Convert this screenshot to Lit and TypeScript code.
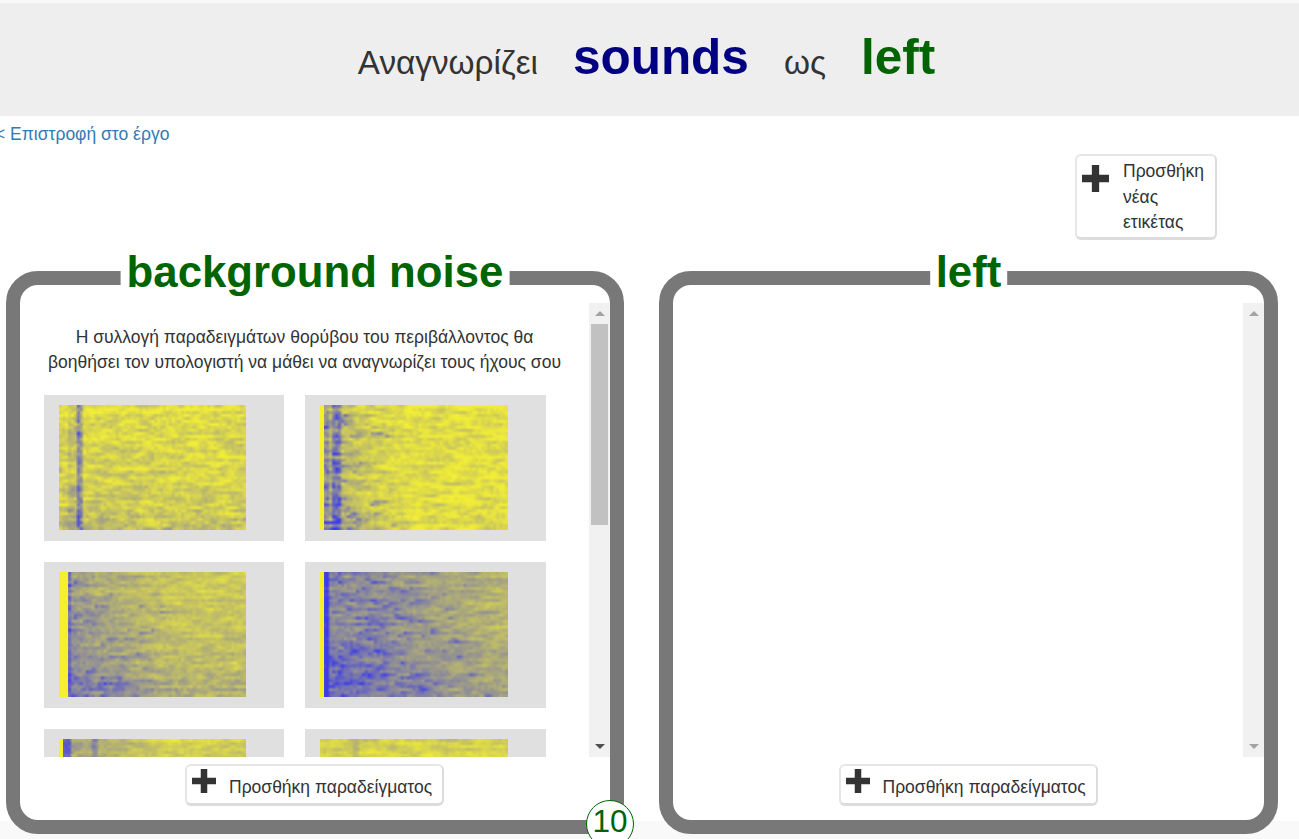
import { LitElement, html, css, svg } from 'lit';
import { customElement, property } from 'lit/decorators.js';

// noise settings for one spectrogram tile
interface Spectro {
  seed: number;
  stripe: number; // pure yellow band on the left, px
  base: number; // overall blue amount
  left: number; // extra blue that fades out to the right
  reach: number; // how far that fade goes, px
  bottom: number; // extra blue towards the bottom
  grain: number;
  spots: number; // chance of a blue streak starting near the left
  cols: { x: number; w: number; v: number; spotty?: boolean }[];
}

const TILES: Spectro[] = [
  { seed: 11, stripe: 0, base: 0.11, left: 0, reach: 60, bottom: 0.14, grain: 0.28, spots: 0,
    cols: [{ x: 19, w: 4, v: 0.36, spotty: true }, { x: 9, w: 10, v: 0.12, spotty: true }] },
  { seed: 23, stripe: 4, base: 0.06, left: 0.26, reach: 85, bottom: 0.05, grain: 0.26, spots: 0.12,
    cols: [{ x: 14, w: 5, v: 0.3, spotty: true }, { x: 5, w: 3, v: 0.14 }] },
  { seed: 37, stripe: 9, base: 0.2, left: 0.28, reach: 125, bottom: 0.14, grain: 0.2, spots: 0.08,
    cols: [{ x: 9, w: 2, v: 0.22 }] },
  { seed: 41, stripe: 4, base: 0.32, left: 0.26, reach: 170, bottom: 0.12, grain: 0.2, spots: 0.12,
    cols: [{ x: 4, w: 4, v: 0.4 }] },
  { seed: 53, stripe: 4, base: 0.18, left: 0.24, reach: 100, bottom: 0, grain: 0.2, spots: 0,
    cols: [{ x: 4, w: 8, v: 0.4 }, { x: 35, w: 3, v: 0.24 }] },
  { seed: 67, stripe: 0, base: 0.14, left: 0, reach: 60, bottom: 0, grain: 0.2, spots: 0,
    cols: [{ x: 35, w: 3, v: 0.14 }] },
];

function rng(seed: number) {
  return () => {
    seed = (seed + 0x6d2b79f5) | 0;
    let t = Math.imul(seed ^ (seed >>> 15), 1 | seed);
    t = (t + Math.imul(t ^ (t >>> 7), 61 | t)) ^ t;
    return ((t ^ (t >>> 14)) >>> 0) / 4294967296;
  };
}

@customElement('spectro-tile')
export class SpectroTile extends LitElement {
  @property({ type: Object }) data!: Spectro;

  static styles = css`
    :host {
      display: block;
      background: #e0e0e0;
      padding: 10px 38px 11px 15px;
      height: 146px;
      box-sizing: border-box;
    }
    canvas {
      display: block;
      width: 100%;
      height: 125px;
    }
  `;

  firstUpdated() {
    const canvas = this.renderRoot.querySelector('canvas') as HTMLCanvasElement;
    const ctx = canvas.getContext('2d')!;
    const d = this.data;
    const rand = rng(d.seed);
    const CW = 3;
    const CH = 3;
    const cols = Math.ceil(187 / CW);
    const rows = Math.ceil(125 / CH);
    const small = document.createElement('canvas');
    small.width = cols;
    small.height = rows;
    const sctx = small.getContext('2d')!;

    for (let r = 0; r < rows; r++) {
      const rowBias = (rand() - 0.5) * 0.06;
      let prev = rand() - 0.5;
      for (let c = 0; c < cols; c++) {
        const x = c * CW;
        const fade = Math.max(0, 1 - x / d.reach);
        // streaky noise, each cell leans on the one before it
        prev = prev * 0.65 + (rand() - 0.5) * 0.8;
        if (rand() < d.spots * fade * (0.4 + r / rows)) prev += 1.2;
        let v = d.base + rowBias + prev * d.grain;
        v += d.left * fade * (0.7 + rand() * 0.6);
        v += d.bottom * Math.pow(r / rows, 2) * (0.5 + rand());
        for (const col of d.cols) {
          if (x + CW > col.x && x < col.x + col.w) {
            v += col.v * (col.spotty ? 0.4 + rand() * 1.2 : 1);
          }
        }
        v = Math.min(1, Math.max(0, v));
        // yellow to blue, the middle comes out as that muddy grey
        const red = 241 + (60 - 241) * v;
        const green = 237 + (60 - 237) * v;
        const blue = 56 + (235 - 56) * v;
        sctx.fillStyle = `rgb(${red | 0},${green | 0},${blue | 0})`;
        sctx.fillRect(c, r, 1, 1);
      }
    }

    ctx.imageSmoothingEnabled = true;
    ctx.drawImage(small, 0, 0, 187, 125);
    if (d.stripe) {
      ctx.fillStyle = '#f4f02e';
      ctx.fillRect(0, 0, d.stripe, 125);
    }
  }

  render() {
    return html`<canvas width="187" height="125"></canvas>`;
  }
}

const plus = svg`<path d="M8.75 0h6.5v8.75H24v6.5h-8.75V24h-6.5v-8.75H0v-6.5h8.75z" fill="#333"/>`;

@customElement('sound-bucket')
export class SoundBucket extends LitElement {
  @property() label = '';
  @property({ type: Boolean }) filled = false;

  static styles = css`
    :host {
      display: block;
      position: relative;
      height: 563px;
      box-sizing: border-box;
      border: 14px solid #787878;
      border-radius: 32px;
      background: #fff;
      padding-top: 18px;
      font-family: 'Liberation Sans', Arial, sans-serif;
      color: #333;
    }
    .title {
      position: absolute;
      top: -38px;
      left: 50%;
      transform: translateX(-50%);
      padding: 0 6px;
      background: #fff;
      color: #006400;
      font-size: 43.75px;
      font-weight: 700;
      line-height: 50px;
      white-space: nowrap;
    }
    .body {
      display: flex;
      height: 454px;
      overflow: hidden;
    }
    .list {
      flex: 1;
      min-width: 0;
      overflow: hidden;
    }
    .hint {
      margin: 22px 0 0;
      font-size: 17.5px;
      line-height: 25px;
      text-align: center;
      white-space: nowrap;
    }
    .tiles {
      display: grid;
      grid-template-columns: 240px 241px;
      gap: 21px;
      margin: 20px 0 0 24px;
    }
    .bar {
      flex: none;
      width: 21px;
      background: #f1f1f1;
      display: flex;
      flex-direction: column;
      align-items: center;
    }
    .up,
    .down {
      flex: none;
      width: 0;
      height: 0;
      border-left: 5px solid transparent;
      border-right: 5px solid transparent;
    }
    .up {
      margin-top: 8px;
      border-bottom: 5px solid #a3a3a3;
    }
    .down {
      margin: auto 0 8px;
      border-top: 5px solid #a3a3a3;
    }
    .filled .down {
      border-top-color: #505050;
    }
    .thumb {
      width: 17px;
      height: 201px;
      margin-top: 8px;
      background: #c1c1c1;
    }
    .foot {
      display: flex;
      justify-content: center;
      margin: 7px 1px 0 0;
    }
    .add {
      display: flex;
      align-items: flex-start;
      box-sizing: border-box;
      width: 259px;
      height: 42px;
      padding: 3px 0 0 5px;
      border: 2px solid #e6e6e6;
      border-right-color: #dcdcdc;
      border-bottom: 3px solid #dcdcdc;
      border-radius: 6px;
      background: #fff;
      font-size: 17.5px;
      white-space: nowrap;
    }
    .add svg {
      flex: none;
      width: 24px;
      height: 24px;
      margin-right: 13px;
    }
    .add span {
      padding-top: 6px;
      line-height: 24px;
    }
  `;

  render() {
    return html`
      <div class="title">${this.label}</div>
      <div class="body ${this.filled ? 'filled' : ''}">
        <div class="list">
          ${this.filled
            ? html`
                <p class="hint">
                  Η συλλογή παραδειγμάτων θορύβου του περιβάλλοντος θα<br />
                  βοηθήσει τον υπολογιστή να μάθει να αναγνωρίζει τους ήχους σου
                </p>
                <div class="tiles">
                  ${TILES.map((t) => html`<spectro-tile .data=${t}></spectro-tile>`)}
                </div>
              `
            : ''}
        </div>
        <div class="bar">
          <div class="up"></div>
          ${this.filled ? html`<div class="thumb"></div>` : ''}
          <div class="down"></div>
        </div>
      </div>
      <div class="foot">
        <div class="add">
          <svg viewBox="0 0 24 24">${plus}</svg>
          <span>Προσθήκη παραδείγματος</span>
        </div>
      </div>
    `;
  }
}

@customElement('app-root')
export class AppRoot extends LitElement {
  static styles = css`
    :host {
      display: block;
      position: relative;
      height: 839px;
      overflow: hidden;
      padding-top: 3px;
      box-sizing: border-box;
      background: linear-gradient(#fff 821px, #f9f9f9 821px);
      font-family: 'Liberation Sans', Arial, sans-serif;
      color: #333;
    }
    .strip {
      position: absolute;
      top: 0;
      left: 0;
      right: 0;
      height: 3px;
      background: #f8f8f8;
    }
    header {
      display: flex;
      justify-content: center;
      align-items: baseline;
      gap: 35px;
      height: 113px;
      box-sizing: border-box;
      padding: 24px 6px 0 0;
      background: #eee;
      font-size: 33.3px;
      line-height: 60px;
    }
    header b {
      font-size: 49.5px;
    }
    .word {
      color: #000080;
    }
    .label {
      color: #006400;
    }
    .back {
      display: block;
      margin-left: -5px;
      height: 36px;
      color: #337ab7;
      font-size: 17.5px;
      line-height: 36px;
      text-decoration: none;
    }
    .tools {
      display: flex;
      justify-content: flex-end;
      padding: 2px 82px 0 0;
    }
    .new-label {
      display: flex;
      align-items: flex-start;
      box-sizing: border-box;
      width: 142px;
      height: 86px;
      padding: 3px 10px 0 5px;
      border: 2px solid #e6e6e6;
      border-right-color: #dcdcdc;
      border-bottom: 3px solid #dcdcdc;
      border-radius: 6px;
      background: #fff;
      font-size: 17.5px;
      line-height: 25.5px;
    }
    .new-label svg {
      flex: none;
      width: 27px;
      height: 27px;
      margin: 6px 14px 0 0;
    }
    .buckets {
      display: grid;
      grid-template-columns: 618px 619px;
      gap: 35px;
      margin-top: 31px;
      padding-left: 6px;
    }
    .count {
      position: absolute;
      top: 800px;
      left: 586px;
      width: 48px;
      height: 48px;
      box-sizing: border-box;
      border: 1px solid #006400;
      border-radius: 50%;
      background: #fff;
      color: #006400;
      font-size: 31.5px;
      line-height: 40px;
      text-align: center;
    }
  `;

  render() {
    return html`
      <div class="strip"></div>
      <header>
        <span>Αναγνωρίζει</span>
        <b class="word">sounds</b>
        <span>ως</span>
        <b class="label">left</b>
      </header>
      <a class="back" href="#">&lt; Επιστροφή στο έργο</a>
      <div class="tools">
        <div class="new-label">
          <svg viewBox="0 0 24 24">${plus}</svg>
          <span>Προσθήκη νέας ετικέτας</span>
        </div>
      </div>
      <div class="buckets">
        <sound-bucket label="background noise" filled></sound-bucket>
        <sound-bucket label="left"></sound-bucket>
      </div>
      <div class="count">10</div>
    `;
  }
}
